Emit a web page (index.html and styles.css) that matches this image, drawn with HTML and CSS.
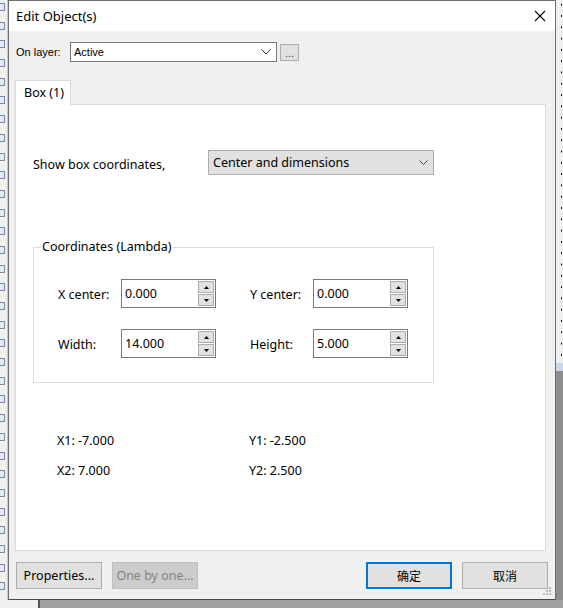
FILE: index.html
```html
<!DOCTYPE html>
<html>
<head>
<meta charset="utf-8">
<title>Edit Object(s)</title>
<link rel="stylesheet" href="styles.css">
</head>
<body>
<div class="desktop">
  <div class="left-strip">
    <span class="mini"></span><span class="mini"></span><span class="mini"></span><span class="mini"></span><span class="mini"></span><span class="mini"></span><span class="mini"></span><span class="mini"></span><span class="mini"></span><span class="mini"></span><span class="mini"></span><span class="mini"></span><span class="mini"></span><span class="mini"></span><span class="mini"></span><span class="mini"></span><span class="mini"></span><span class="mini"></span><span class="mini"></span><span class="mini"></span><span class="mini"></span><span class="mini"></span><span class="mini"></span><span class="mini"></span><span class="mini"></span><span class="mini"></span><span class="mini"></span><span class="mini"></span><span class="mini"></span><span class="mini"></span><span class="mini"></span><span class="mini"></span>
  </div>

  <div class="dialog">
    <div class="titlebar">
      <span class="title">Edit Object(s)</span>
      <svg class="close" width="12" height="12" viewBox="0 0 12 12"><path d="M1 1L11 11M11 1L1 11" stroke="#000" stroke-width="1.1" fill="none"/></svg>
    </div>

    <div class="body">
      <div class="layer-row">
        <span class="layer-label">On layer:</span>
        <div class="combo">
          <span>Active</span>
          <svg width="10" height="6" viewBox="0 0 10 6"><path d="M0.5 0.5L5 5L9.5 0.5" stroke="#333" stroke-width="1" fill="none"/></svg>
        </div>
        <div class="dots-btn">...</div>
      </div>

      <div class="tabs">
        <div class="tab">Box (1)</div>
      </div>
      <div class="panel">
        <div class="show-row">
          <span class="show-label">Show box coordinates,</span>
          <div class="dropdown">
            <span>Center and dimensions</span>
            <svg width="9" height="5" viewBox="0 0 9 5"><path d="M0.5 0.5L4.5 4.5L8.5 0.5" stroke="#444" stroke-width="1" fill="none"/></svg>
          </div>
        </div>

        <div class="group">
          <span class="legend">Coordinates (Lambda)</span>
          <div class="field-grid">
            <span class="flabel">X center:</span>
            <div class="spin"><span class="val">0.000</span><div class="spin-btns"><div class="sb"><svg width="5" height="3" viewBox="0 0 5 3"><path d="M2.5 0L5 3H0Z" fill="#000"/></svg></div><div class="sb"><svg width="5" height="3" viewBox="0 0 5 3"><path d="M0 0H5L2.5 3Z" fill="#000"/></svg></div></div></div>
            <span class="flabel">Y center:</span>
            <div class="spin"><span class="val">0.000</span><div class="spin-btns"><div class="sb"><svg width="5" height="3" viewBox="0 0 5 3"><path d="M2.5 0L5 3H0Z" fill="#000"/></svg></div><div class="sb"><svg width="5" height="3" viewBox="0 0 5 3"><path d="M0 0H5L2.5 3Z" fill="#000"/></svg></div></div></div>
            <span class="flabel">Width:</span>
            <div class="spin"><span class="val">14.000</span><div class="spin-btns"><div class="sb"><svg width="5" height="3" viewBox="0 0 5 3"><path d="M2.5 0L5 3H0Z" fill="#000"/></svg></div><div class="sb"><svg width="5" height="3" viewBox="0 0 5 3"><path d="M0 0H5L2.5 3Z" fill="#000"/></svg></div></div></div>
            <span class="flabel">Height:</span>
            <div class="spin"><span class="val">5.000</span><div class="spin-btns"><div class="sb"><svg width="5" height="3" viewBox="0 0 5 3"><path d="M2.5 0L5 3H0Z" fill="#000"/></svg></div><div class="sb"><svg width="5" height="3" viewBox="0 0 5 3"><path d="M0 0H5L2.5 3Z" fill="#000"/></svg></div></div></div>
          </div>
        </div>

        <div class="corners">
          <span>X1: -7.000</span><span>Y1: -2.500</span>
          <span>X2: 7.000</span><span>Y2: 2.500</span>
        </div>
      </div>

      <div class="buttons">
        <div class="btn">Properties...</div>
        <div class="btn disabled">One by one...</div>
        <div class="spacer"></div>
        <div class="btn default cjk">确定</div>
        <div class="btn cjk last">取消</div>
      </div>
      <svg class="grip" width="9" height="9" viewBox="0 0 9 9" fill="#bcbcbc"><rect x="6" y="0" width="2" height="2"/><rect x="3" y="3" width="2" height="2"/><rect x="6" y="3" width="2" height="2"/><rect x="0" y="6" width="2" height="2"/><rect x="3" y="6" width="2" height="2"/><rect x="6" y="6" width="2" height="2"/></svg>
    </div>
  </div>

  <div class="right-strip">
    <div class="dotted"></div>
    <div class="sel"></div>
    <div class="gray"></div>
  </div>
</div>
<div class="bottom-strip">
  <div class="bs-light"></div>
  <div class="bs-line"></div>
  <div class="bs-gray"></div>
</div>
</body>
</html>
```

FILE: styles.css
```css
* { box-sizing: border-box; }
html, body { margin: 0; padding: 0; }
body {
  width: 563px;
  height: 608px;
  overflow: hidden;
  background: #a0a0a0;
  font-family: "Noto Sans", "Noto Sans CJK SC", sans-serif;
  font-size: 12.5px;
  color: #000;
}
.desktop {
  display: flex;
  height: 600px;
}
.left-strip {
  width: 8px;
  background: #f0f0f0;
  display: flex;
  flex-direction: column;
  padding-top: 3px;
  gap: 10.7px;
  overflow: hidden;
  border-right: 1px solid #c8c8c8;
}
.mini {
  display: block;
  flex: none;
  width: 6px;
  height: 8px;
  margin-left: -1px;
  border: 1px solid #7b8aa6;
  background: #e4e9f2;
}
.dialog {
  position: relative;
  width: 548px;
  height: 600px;
  border: 1px solid #6e6e6e;
  border-bottom-color: #4a4a4a;
  display: flex;
  flex-direction: column;
  background: #f0f0f0;
}
.titlebar {
  height: 30px;
  background: #fff;
  display: flex;
  align-items: center;
  justify-content: space-between;
  padding: 0 9px 1px 7px;
}
.title { font-size: 13px; }
.close { display: block; }
.body {
  position: relative;
  flex: 1;
  padding: 11px 8px 0 6px;
}
.layer-row {
  display: flex;
  align-items: center;
  height: 20px;
  font-family: "Liberation Sans", Arial, sans-serif;
  font-size: 11px;
}
.layer-label {
  width: 55px;
  padding-left: 1px;
}
.combo {
  width: 207px;
  height: 20px;
  background: #fff;
  border: 1px solid #7a7a7a;
  display: flex;
  align-items: center;
  justify-content: space-between;
  padding: 0 5px 0 3px;
}
.dots-btn {
  margin-left: 3px;
  width: 19px;
  height: 17px;
  background: #e1e1e1;
  border: 1px solid #adadad;
  display: flex;
  justify-content: center;
  align-items: flex-end;
  line-height: 14px;
  font-size: 11px;
  color: #4b1e5a;
}
.tabs {
  margin-top: 18px;
  display: flex;
  height: 24px;
}
.tab {
  width: 56px;
  height: 25px;
  background: #fff;
  border: 1px solid #d9d9d9;
  border-bottom: none;
  padding: 3px 0 0 8px;
  position: relative;
  z-index: 1;
}
.panel {
  width: 531px;
  height: 447px;
  background: #fff;
  border: 1px solid #d9d9d9;
  padding: 45px 0 0 17px;
}
.show-row {
  display: flex;
  align-items: center;
  height: 25px;
}
.show-label { width: 175px; padding-top: 3px; }
.dropdown {
  width: 226px;
  height: 25px;
  background: #e1e1e1;
  border: 1px solid #adadad;
  display: flex;
  align-items: center;
  justify-content: space-between;
  padding: 0 5px 0 4px;
}
.group {
  position: relative;
  margin-top: 72px;
  width: 401px;
  height: 136px;
  border: 1px solid #dcdcdc;
  padding: 31px 0 0 24px;
}
.legend {
  position: absolute;
  top: -9px;
  left: 7px;
  padding: 0 1px;
  background: #fff;
  line-height: 16px;
}
.field-grid {
  display: grid;
  grid-template-columns: 63px 95px 97px 95px;
  row-gap: 21px;
  align-items: center;
}
.field-grid .flabel:nth-child(3), .field-grid .flabel:nth-child(7) { margin-left: 34px; }
.flabel { padding-top: 1px; }
.spin {
  height: 29px;
  border: 1px solid #7a7a7a;
  background: #fff;
  display: flex;
  justify-content: space-between;
  align-items: center;
  padding: 0 1px 0 3px;
}
.spin-btns {
  display: flex;
  flex-direction: column;
  gap: 1px;
}
.sb {
  width: 16px;
  height: 12px;
  background: #e1e1e1;
  border: 1px solid #adadad;
  display: flex;
  justify-content: center;
  align-items: center;
}
.sb svg { display: block; }
.corners {
  margin-top: 50px;
  padding-left: 24px;
  display: grid;
  grid-template-columns: 192px auto;
  row-gap: 14px;
  line-height: 16px;
}
.buttons {
  display: flex;
  margin-top: 11px;
  padding-left: 1px;
  gap: 10px;
}
.spacer { flex: 1; }
.btn {
  width: 86px;
  height: 27px;
  background: #e1e1e1;
  border: 1px solid #adadad;
  display: flex;
  align-items: center;
  justify-content: center;
}
.btn.disabled {
  background: #cccccc;
  border-color: #bfbfbf;
  color: #838383;
}
.btn.default { border: 2px solid #0078d7; }
.btn.cjk { font-family: "Noto Sans CJK SC", sans-serif; font-size: 12px; }
.btn.last { margin-right: -1px; }
.grip {
  position: absolute;
  right: 3px;
  bottom: 3px;
}
.right-strip {
  width: 7px;
  display: flex;
  flex-direction: column;
}
.dotted {
  height: 363px;
  background-color: #f0f0f0;
  background-image: radial-gradient(circle, #000 0.6px, transparent 0.8px);
  background-size: 7px 11.3px;
  background-position: 2px -1px;
}
.sel { height: 8px; background: #c9d8e8; }
.gray { flex: 1; background: #8e8e8e; }
.bottom-strip {
  display: flex;
  height: 8px;
}
.bs-light { width: 38px; background: #f0f0f0; border-left: 7px solid #f0f0f0; }
.bs-line { width: 2px; background: #555; }
.bs-gray { flex: 1; background: #a0a0a0; }
```
